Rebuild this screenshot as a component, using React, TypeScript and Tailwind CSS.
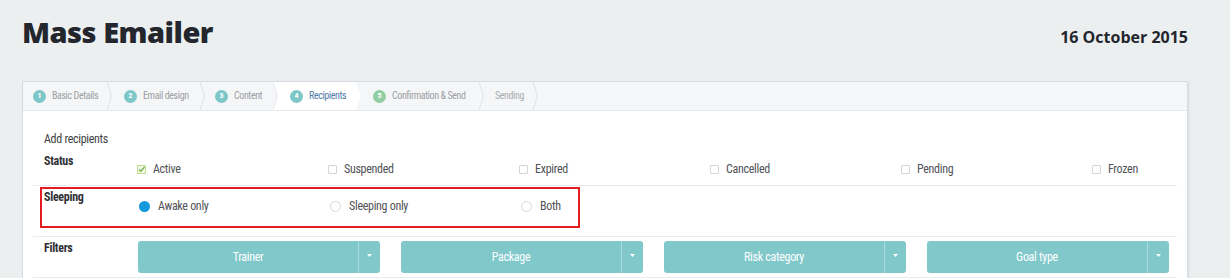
const narrow = "font-['Liberation_Sans_Narrow','Roboto_Condensed',Roboto,sans-serif]";

const tabs = [
  { n: "1", label: "Basic Details", w: "w-[89px]", pl: "pl-[10px]", circle: "bg-[#7dc7c9]" },
  { n: "2", label: "Email design", w: "w-[93px]", pl: "pl-[12px]", circle: "bg-[#7dc7c9]" },
  { n: "3", label: "Content", w: "w-[73px]", pl: "pl-[10px]", circle: "bg-[#7dc7c9]" },
];

const statuses = ["Active", "Suspended", "Expired", "Cancelled", "Pending", "Frozen"];
const sleeping = ["Awake only", "Sleeping only", "Both"];
const filters = ["Trainer", "Package", "Risk category", "Goal type"];

function Chevron() {
  return (
    <svg width="5" height="28" viewBox="0 0 5 28" className="shrink-0">
      <polyline points="0,0 4.5,14 0,28" fill="none" stroke="#dde1e7" strokeWidth="1" />
    </svg>
  );
}

function StepDot({ n, color }: { n: string; color: string }) {
  return (
    <span
      className={`flex h-[13px] w-[13px] shrink-0 items-center justify-center rounded-full text-[8px] font-bold leading-none tracking-normal text-white ${color}`}
    >
      {n}
    </span>
  );
}

function Checkbox({ checked }: { checked?: boolean }) {
  if (checked) {
    return (
      <svg width="9" height="9" viewBox="0 0 9 9" className="shrink-0">
        <rect x="0.5" y="0.5" width="8" height="8" fill="#f4f9ea" stroke="#c2dc8e" />
        <polyline points="2,4.5 3.8,6.3 7.5,2" fill="none" stroke="#6db33f" strokeWidth="1.3" />
      </svg>
    );
  }
  return <span className="h-[9px] w-[9px] shrink-0 rounded-[1px] border border-[#d2d5d9] bg-white" />;
}

function Radio({ checked }: { checked?: boolean }) {
  return checked ? (
    <span className="h-[11px] w-[11px] shrink-0 rounded-full bg-[#1399dc]" />
  ) : (
    <span className="h-[11px] w-[11px] shrink-0 rounded-full border border-[#d5d8dc] bg-white" />
  );
}

export default function App() {
  return (
    <div className={`min-h-screen bg-[#eceff0] pl-[22px] pr-[42px] ${narrow}`}>
      <div className="flex h-[81px] items-start justify-between pt-[12px]">
        <h1 className="font-['Open_Sans',sans-serif] text-[29px] font-extrabold leading-[40px] tracking-[-0.5px] text-[#24262e]">
          Mass Emailer
        </h1>
        <div className="pt-[15px] font-['Open_Sans',sans-serif] text-[16px] font-bold leading-[20px] text-[#24262e]">
          16 October 2015
        </div>
      </div>

      <div className="w-[1166px] border border-[#d6dbe3] bg-white shadow-[1px_1px_2px_rgba(0,0,0,0.08)]">
        <div className="flex h-[29px] border-b border-[#e5e8ec] bg-[#f5f6f8] text-[10px] leading-none tracking-[-0.4px]">
          {tabs.map((t) => (
            <div key={t.n} className={`flex h-full items-center ${t.w}`}>
              <div className={`flex flex-1 items-center gap-[6px] ${t.pl}`}>
                <StepDot n={t.n} color={t.circle} />
                <span className="text-[#9c9ea3]">{t.label}</span>
              </div>
              <Chevron />
            </div>
          ))}
          <div className="-ml-[5px] flex h-full w-[88px] items-center bg-white [clip-path:polygon(0_0,calc(100%-5px)_0,100%_50%,calc(100%-5px)_100%,0_100%,5px_50%)]">
            <div className="flex items-center gap-[6px] pl-[17px]">
              <StepDot n="4" color="bg-[#7dc7c9]" />
              <span className="text-[#4f7aa6]">Recipients</span>
            </div>
          </div>
          <div className="flex h-full w-[123px] items-center">
            <div className="flex flex-1 items-center gap-[6px] pl-[12px]">
              <StepDot n="5" color="bg-[#90cea2]" />
              <span className="text-[#9c9ea3]">Confirmation &amp; Send</span>
            </div>
            <Chevron />
          </div>
          <div className="flex h-full w-[54px] items-center">
            <span className="flex-1 pl-[11px] text-[#a9abb0]">Sending</span>
            <Chevron />
          </div>
        </div>

        <div className="px-[10px] pt-[20px] text-[12px] leading-[14px] tracking-[-0.3px]">
          <div className="pl-[11px] leading-[16px] text-[#3d3f44]">Add recipients</div>

          <div className="grid grid-cols-[104px_1fr] border-b border-[#e8eaed] pt-[7px] pb-[9px]">
            <div className="pl-[11px] font-bold text-[#2f3136]">Status</div>
            <div className="grid grid-cols-[repeat(5,191px)_auto] pt-[8px] text-[#505257]">
              {statuses.map((s, i) => (
                <label key={s} className="flex items-center gap-[7px]">
                  <Checkbox checked={i === 0} />
                  <span>{s}</span>
                </label>
              ))}
            </div>
          </div>

          <div className="relative grid grid-cols-[104px_1fr] border-b border-[#e8eaed] pt-[4px] pb-[23px]">
            <div className="pl-[11px] font-bold text-[#2f3136]">Sleeping</div>
            <div className="grid grid-cols-[repeat(5,191px)_auto] pt-[9px] text-[#505257]">
              {sleeping.map((s, i) => (
                <label key={s} className="flex items-center gap-[8px] pl-[2px]">
                  <Radio checked={i === 0} />
                  <span>{s}</span>
                </label>
              ))}
            </div>
            <div className="pointer-events-none absolute left-[7px] top-[1px] h-[41px] w-[540px] border-2 border-[#e31b23]" />
          </div>

          <div className="grid grid-cols-[104px_1fr] border-b border-[#e8eaed] pt-[4px] pb-[4px]">
            <div className="pl-[11px] font-bold text-[#2f3136]">Filters</div>
            <div className="grid grid-cols-[repeat(4,242px)] gap-x-[21px] pl-[1px]">
              {filters.map((f) => (
                <div key={f} className="flex h-[32px] rounded-[3px] bg-[#80c8ca] text-white">
                  <div className="flex flex-1 items-center justify-center">{f}</div>
                  <div className="flex w-[22px] items-center justify-center border-l border-[#aadcdc]">
                    <svg width="5" height="3" viewBox="0 0 5 3" className="-mt-[4px]">
                      <polygon points="0,0 5,0 2.5,3" fill="#ffffff" />
                    </svg>
                  </div>
                </div>
              ))}
            </div>
          </div>
        </div>
      </div>
    </div>
  );
}
